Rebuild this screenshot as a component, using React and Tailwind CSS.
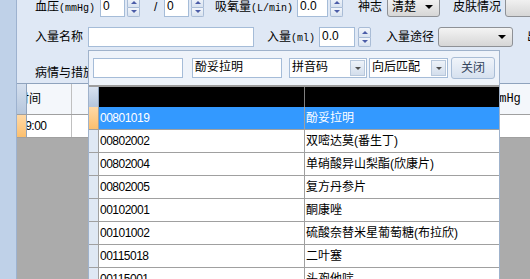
import React from 'react'

const ROWS = [
  ['00801019', '酚妥拉明'],
  ['00802002', '双嘧达莫(番生丁)'],
  ['00802004', '单硝酸异山梨酯(欣康片)'],
  ['00802005', '复方丹参片'],
  ['00102001', '酮康唑'],
  ['00101002', '硫酸奈替米星葡萄糖(布拉欣)'],
  ['00115018', '二叶塞'],
  ['00115001', '头孢他啶'],
]

// 上下スピンボタン
function Spinner() {
  return (
    <div className="w-[13px] h-[20px] flex flex-col shrink-0">
      <div className="flex-1 flex items-center justify-center border border-[#a9bcd6] bg-linear-to-b from-[#f3f6fb] to-[#d9e3f0] rounded-t-[2px]">
        <span className="w-0 h-0 border-l-[3px] border-r-[3px] border-b-[3px] border-l-transparent border-r-transparent border-b-[#4b5ca8]"></span>
      </div>
      <div className="flex-1 flex items-center justify-center border border-t-0 border-[#a9bcd6] bg-linear-to-b from-[#f3f6fb] to-[#d9e3f0] rounded-b-[2px]">
        <span className="w-0 h-0 border-l-[3px] border-r-[3px] border-t-[3px] border-l-transparent border-r-transparent border-t-[#4b5ca8]"></span>
      </div>
    </div>
  )
}

function TextBox({ width, value }) {
  return (
    <div className={`${width} h-[20px] shrink-0 border border-[#a5bcd8] bg-white pl-[2px] text-[12px] leading-[16px] overflow-hidden whitespace-nowrap`}>
      {value}
    </div>
  )
}

// XP風コンボボックス
function Combo({ width, value }) {
  return (
    <div className={`${width} h-[20px] shrink-0 flex items-center justify-between rounded-[3px] border border-[#8e9196] bg-linear-to-b from-[#f4f4f4] to-[#d6d6d6] pl-[4px] pr-[6px] text-[12px]`}>
      <span>{value}</span>
      <span className="w-0 h-0 border-l-[4px] border-r-[4px] border-t-[4px] border-l-transparent border-r-transparent border-t-black"></span>
    </div>
  )
}

function PopupSelect({ width, value }) {
  return (
    <div className={`${width} h-[20px] shrink-0 flex border border-[#a5bcd8] bg-white text-[12px]`}>
      <div className="flex-1 pl-[2px] leading-[17px]">{value}</div>
      <div className="w-[15px] m-[1px] flex items-center justify-center border border-[#b8c8dc] bg-linear-to-b from-[#eef3f9] to-[#d3deec]">
        <span className="w-0 h-0 border-l-[3px] border-r-[3px] border-t-[3px] border-l-transparent border-r-transparent border-t-[#505050]"></span>
      </div>
    </div>
  )
}

function Label({ width, pad, text, unit }) {
  return (
    <div className={`${width} ${pad} shrink-0 whitespace-nowrap text-[12px]`}>
      {text}
      {unit && <span className="font-['Liberation_Mono',monospace] text-[10px]">{unit}</span>}
    </div>
  )
}

export default function App() {
  return (
    <div className="relative w-[530px] h-[279px] overflow-hidden flex bg-[#dfe8f5] text-black font-['Liberation_Sans','Noto_Sans_CJK_SC',sans-serif]">
      {/* 左の帯 */}
      <div className="w-[17px] h-full shrink-0 bg-[#bfd1e8] border-r border-[#9db2cf]"></div>

      <div className="relative flex-1 flex flex-col min-w-0">
        {/* 1行目 */}
        <div className="-mt-[4px] h-[22px] flex items-center pl-[18px]">
          <Label width="w-[65px]" text="血压" unit="(mmHg)" />
          <TextBox width="w-[25px]" value="0" />
          <div className="ml-[2px]"><Spinner /></div>
          <Label width="w-[24px]" pad="pl-[14px]" text="/" />
          <TextBox width="w-[25px]" value="0" />
          <div className="ml-[2px]"><Spinner /></div>
          <Label width="w-[93px]" pad="pl-[11px]" text="吸氧量" unit="(L/min)" />
          <TextBox width="w-[31px]" value="0.0" />
          <div className="ml-[2px]"><Spinner /></div>
          <Label width="w-[44px]" pad="pl-[15px]" text="神志" />
          <Combo width="w-[53px]" value="清楚" />
          <Label width="w-[65px]" pad="pl-[13px]" text="皮肤情况" />
          <Combo width="w-[40px]" value="" />
        </div>

        {/* 2行目 */}
        <div className="mt-[9px] h-[20px] flex items-center pl-[18px]">
          <Label width="w-[53px]" text="入量名称" />
          <TextBox width="w-[166px]" value="" />
          <Label width="w-[65px]" pad="pl-[13px]" text="入量" unit="(ml)" />
          <TextBox width="w-[36px]" value="0.0" />
          <div className="ml-[3px]"><Spinner /></div>
          <Label width="w-[67px]" pad="pl-[15px]" text="入量途径" />
          <Combo width="w-[75px]" value="" />
          <Label width="w-[30px]" pad="pl-[14px]" text="出" />
        </div>

        {/* 3行目 */}
        <div className="mt-[17px] h-[18px] flex items-center pl-[18px]">
          <Label width="w-[80px]" text="病情与措施" />
        </div>

        {/* 背後のグリッド */}
        <div className="mt-[1px] flex-1 flex flex-col border-t border-[#8fa3bd]">
          <div className="h-[31px] flex bg-[#f4f7fb] border-b border-[#a0a0a0]">
            <div className="w-[10px] shrink-0 bg-linear-to-b from-[#d4dfee] to-[#b6c7dd] border-r border-[#8fa3bd]"></div>
            <div className="w-[45px] shrink-0 overflow-hidden border-r border-[#c0c0c0] flex items-center">
              <span className="-ml-[10px] text-[12px] whitespace-nowrap">时间</span>
            </div>
            <div className="w-[368px] shrink-0 border-r border-[#c0c0c0]"></div>
            <div className="flex-1 flex items-center pl-[52px]">
              <span className="font-['Liberation_Mono',monospace] text-[12px] whitespace-nowrap">mmHg</span>
            </div>
          </div>
          <div className="h-[23px] flex bg-white border-b border-[#a0a0a0]">
            <div className="w-[10px] shrink-0 bg-linear-to-b from-[#ffd9a6] to-[#fbbf6e] border-r border-[#8fa3bd]"></div>
            <div className="w-[45px] shrink-0 overflow-hidden border-r border-[#c0c0c0] flex items-center">
              <span className="-ml-[8px] text-[12px] tracking-[-0.5px] whitespace-nowrap">09:00</span>
            </div>
            <div className="flex-1"></div>
          </div>
          <div className="flex-1 bg-[#ababab]"></div>
        </div>

        {/* 検索ポップアップ */}
        <div className="absolute left-[71px] top-[50px] w-[412px] h-[240px] flex flex-col border border-[#9fb2cb] bg-[#eef3fa]">
          <div className="mt-[6px] h-[22px] flex items-start pl-[4px]">
            <div className="mt-[1px]"><TextBox width="w-[90px]" value="" /></div>
            <div className="mt-[1px] ml-[9px]"><TextBox width="w-[90px]" value="酚妥拉明" /></div>
            <div className="mt-[1px] ml-[7px]"><PopupSelect width="w-[78px]" value="拼音码" /></div>
            <div className="mt-[1px] ml-[2px]"><PopupSelect width="w-[79px]" value="向后匹配" /></div>
            <button className="ml-[3px] w-[44px] h-[22px] rounded-[3px] border border-[#a9bdd6] bg-linear-to-b from-[#f0f4fa] to-[#d6e1ef] text-[12px] text-[#34445c]">
              关闭
            </button>
          </div>

          <div className="mt-[6px] flex-1 flex flex-col border-t-2 border-[#9d9d9d] bg-white">
            <div className="h-[20px] shrink-0 flex bg-black">
              <div className="w-[10px] shrink-0 bg-linear-to-b from-[#d8e2f0] to-[#b4c5dc] border-r border-[#8fa3bd]"></div>
              <div className="w-[206px] shrink-0 border-r border-[#808080]"></div>
              <div className="flex-1"></div>
            </div>
            {ROWS.map(([code, name], idx) => (
              <div
                key={code}
                className={`h-[23px] shrink-0 flex border-b border-[#a0a0a0] ${idx === 0 ? 'bg-[#3399ff] text-white' : 'bg-white text-black'}`}
              >
                <div className={`w-[10px] shrink-0 border-r border-[#a0a0a0] ${idx === 0 ? 'bg-linear-to-b from-[#ffd9a6] to-[#fbbf6e]' : 'bg-[#dfe8f4]'}`}></div>
                <div className="w-[206px] shrink-0 border-r border-[#a0a0a0] pl-[1px] flex items-center text-[12px] tracking-[-0.5px]">
                  {code}
                </div>
                <div className="flex-1 pl-[1px] flex items-center text-[12px] whitespace-nowrap">
                  {name}
                </div>
              </div>
            ))}
          </div>
        </div>
      </div>
    </div>
  )
}
